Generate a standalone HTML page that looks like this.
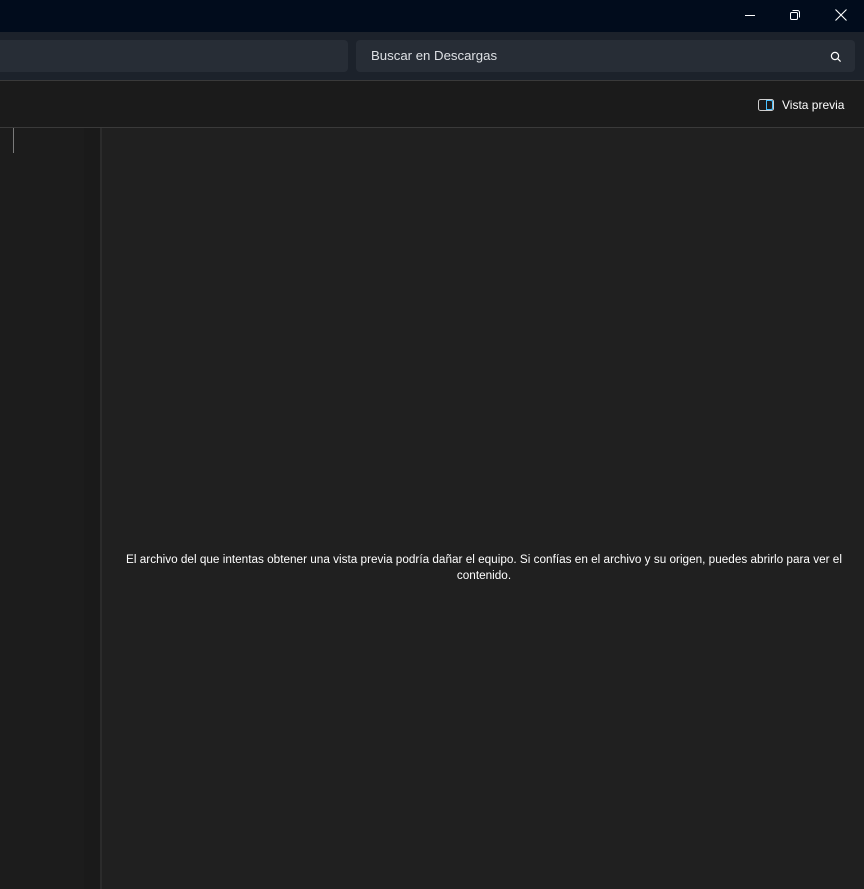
<!DOCTYPE html>
<html><head><style>
body{margin:0;width:864px;height:889px;overflow:hidden;background:#202020;font-family:"Liberation Sans",sans-serif;position:relative}
div{position:absolute;box-sizing:border-box}
</style></head><body>
<div style="left:0;top:0;width:864px;height:32px;background:#010c1c"></div>
<div style="left:745px;top:15px;width:10px;height:1px;background:#fff"></div>
<svg style="position:absolute;left:788px;top:8px" width="14" height="14" viewBox="0 0 14 14" fill="none" stroke="#fff" stroke-width="1"><rect x="2.5" y="4.5" width="7" height="7" rx="1.2"/><path d="M4.5 2.5h5a2 2 0 0 1 2 2v5"/></svg>
<svg style="position:absolute;left:834px;top:8px" width="14" height="14" viewBox="0 0 14 14" stroke="#fff" stroke-width="1.1"><path d="M1.5 1.5l11 11M12.5 1.5l-11 11"/></svg>
<div style="left:0;top:32px;width:864px;height:48px;background:#1c222b"></div>
<div style="left:-10px;top:40px;width:358px;height:32px;background:#272d36;border-radius:4px"></div>
<div style="left:356px;top:40px;width:499px;height:32px;background:#272d36;border-radius:4px;color:#dde0e4;font-size:13.2px;line-height:32px;padding-left:15px">Buscar en Descargas</div>
<svg style="position:absolute;left:829px;top:50px" width="14" height="14" viewBox="0 0 14 14" fill="none" stroke="#fff" stroke-width="1.2"><circle cx="6" cy="6" r="3.6"/><path d="M8.6 8.6l3 3"/></svg>
<div style="left:0;top:80px;width:864px;height:1px;background:#3a3a3a"></div>
<div style="left:0;top:81px;width:864px;height:46px;background:#1b1b1b"></div>
<div style="left:758px;top:99px;width:16px;height:12px;border:1px solid #cfcfcf;border-radius:2.5px"></div>
<div style="left:766px;top:100px;width:7px;height:10px;border:1px solid #4cc2ff;border-left-width:1px;border-radius:0 2px 2px 0"></div>
<div style="left:782px;top:96px;color:#fff;font-size:12px;line-height:18px">Vista previa</div>
<div style="left:0;top:127px;width:864px;height:1px;background:#3a3a3a"></div>
<div style="left:0;top:128px;width:84px;height:761px;background:#1c1c1c"></div>
<div style="left:84px;top:128px;width:16px;height:761px;background:#1a1a1a"></div>
<div style="left:100px;top:128px;width:2px;height:761px;background:#2b2b2b"></div>
<div style="left:13px;top:128px;width:1px;height:25px;background:#7a7a7a"></div>
<div style="left:102px;top:128px;width:762px;height:761px;background:#202020"></div>
<div style="left:112px;top:552px;width:744px;color:#fff;font-size:11.75px;line-height:16px;text-align:center">El archivo del que intentas obtener una vista previa podría dañar el equipo. Si confías en el archivo y su origen, puedes abrirlo para ver el contenido.</div>
</body></html>
